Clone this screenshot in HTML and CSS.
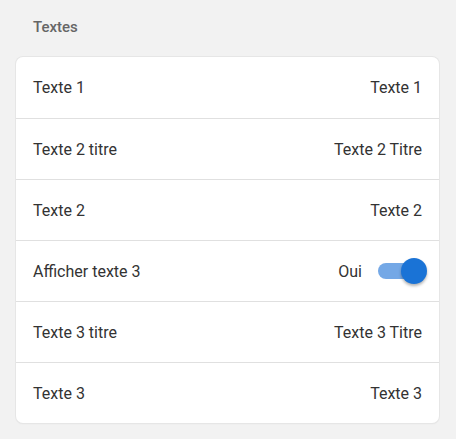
FILE: index.html
```html
<!DOCTYPE html>
<html lang="fr">
<head>
<meta charset="utf-8">
<link rel="stylesheet" href="styles.css">
</head>
<body>
<div class="page">
  <h2 class="section-title">Textes</h2>
  <div class="card">
    <div class="row"><span>Texte 1</span><span>Texte 1</span></div>
    <div class="row"><span>Texte 2 titre</span><span>Texte 2 Titre</span></div>
    <div class="row"><span>Texte 2</span><span>Texte 2</span></div>
    <div class="row"><span>Afficher texte 3</span>
      <span class="toggle-wrap"><span>Oui</span><span class="switch"><span class="track"></span><span class="thumb"></span></span></span>
    </div>
    <div class="row"><span>Texte 3 titre</span><span>Texte 3 Titre</span></div>
    <div class="row"><span>Texte 3</span><span>Texte 3</span></div>
  </div>
</div>
</body>
</html>
```
FILE: styles.css
```css
html, body { margin: 0; padding: 0; }
body {
  background: #f2f2f2;
  font-family: Roboto, "Liberation Sans", sans-serif;
  width: 456px;
  height: 439px;
  overflow: hidden;
}
.page {
  padding: 17px 17px 0 16px;
}
.section-title {
  margin: 0;
  padding: 0 0 0 17px;
  height: 40px;
  font-size: 15px;
  font-weight: 500;
  color: #666;
  line-height: 21px;
}
.card {
  background: #fff;
  border-radius: 7px;
  box-shadow: 0 0 0 1px #e6e6e6, 0 1px 2px rgba(0,0,0,0.06);
}
.row {
  display: flex;
  justify-content: space-between;
  align-items: center;
  height: 60px;
  padding: 0 17px 0 17px;
  border-top: 1px solid #e0e0e0;
  font-size: 16px;
  color: #333;
}
.row:first-child { border-top: none; height: 61px; }
.toggle-wrap { display: flex; align-items: center; gap: 16px; }
.switch { position: relative; width: 49px; height: 26px; display: inline-block; margin-right: -5px; }
.track {
  position: absolute; left: 0; top: 5px; width: 42px; height: 16px;
  border-radius: 8px; background: #74a8e6;
}
.thumb {
  position: absolute; right: 0; top: 0; width: 26px; height: 26px;
  border-radius: 50%; background: #1a73d6;
  box-shadow: 0 2px 3px rgba(0,0,0,0.3);
}
```
